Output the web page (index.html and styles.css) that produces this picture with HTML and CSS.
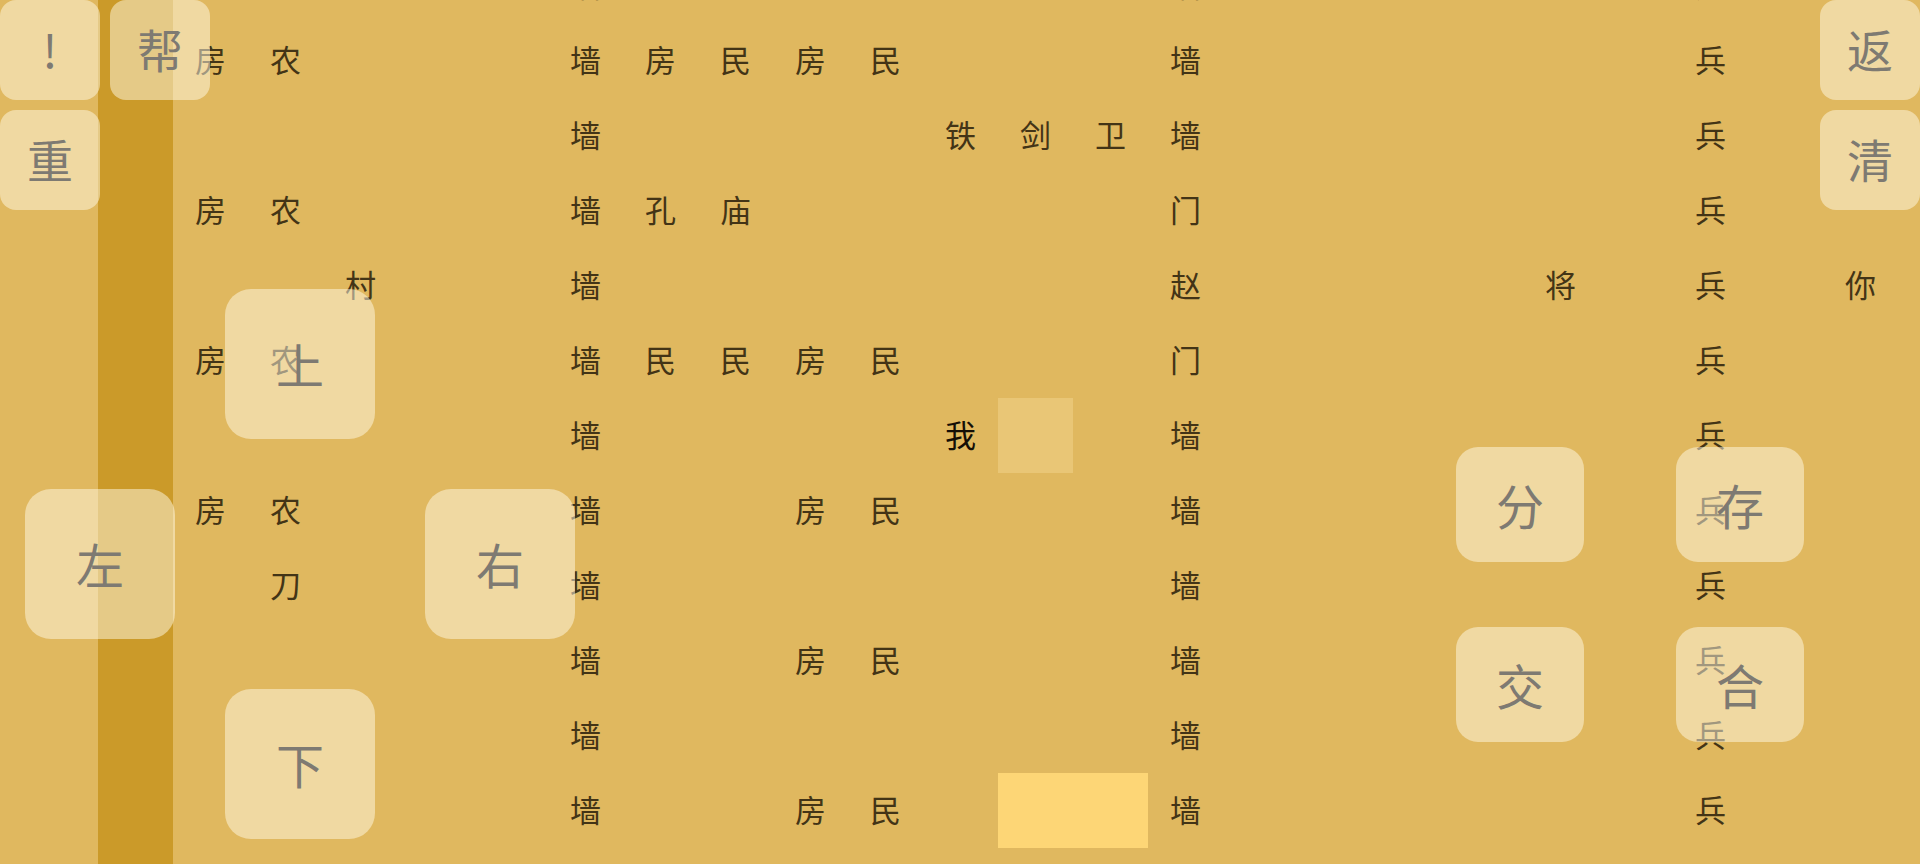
FILE: index.html
```html
<!DOCTYPE html>
<html lang="zh">
<head>
<meta charset="utf-8">
<title>村</title>
<link rel="stylesheet" href="styles.css">
</head>
<body>
<div class="screen">
  <div class="map">
    <div class="row"><i></i><i></i><i></i><i></i><i></i><i></i><i></i><i></i><i>墙</i><i></i><i></i><i></i><i></i><i></i><i></i><i></i><i>墙</i><i></i><i></i><i></i><i></i><i></i><i></i><i>兵</i><i></i><i></i></div>
    <div class="row"><i></i><i></i><i></i><i>房</i><i>农</i><i></i><i></i><i></i><i>墙</i><i>房</i><i>民</i><i>房</i><i>民</i><i></i><i></i><i></i><i>墙</i><i></i><i></i><i></i><i></i><i></i><i></i><i>兵</i><i></i><i></i></div>
    <div class="row"><i></i><i></i><i></i><i></i><i></i><i></i><i></i><i></i><i>墙</i><i></i><i></i><i></i><i></i><i>铁</i><i>剑</i><i>卫</i><i>墙</i><i></i><i></i><i></i><i></i><i></i><i></i><i>兵</i><i></i><i></i></div>
    <div class="row"><i></i><i></i><i></i><i>房</i><i>农</i><i></i><i></i><i></i><i>墙</i><i>孔</i><i>庙</i><i></i><i></i><i></i><i></i><i></i><i>门</i><i></i><i></i><i></i><i></i><i></i><i></i><i>兵</i><i></i><i></i></div>
    <div class="row"><i></i><i></i><i></i><i></i><i></i><i>村</i><i></i><i></i><i>墙</i><i></i><i></i><i></i><i></i><i></i><i></i><i></i><i>赵</i><i></i><i></i><i></i><i></i><i>将</i><i></i><i>兵</i><i></i><i>你</i></div>
    <div class="row"><i></i><i></i><i></i><i>房</i><i>农</i><i></i><i></i><i></i><i>墙</i><i>民</i><i>民</i><i>房</i><i>民</i><i></i><i></i><i></i><i>门</i><i></i><i></i><i></i><i></i><i></i><i></i><i>兵</i><i></i><i></i></div>
    <div class="row"><i></i><i></i><i></i><i></i><i></i><i></i><i></i><i></i><i>墙</i><i></i><i></i><i></i><i></i><i class="me">我</i><i class="near"></i><i></i><i>墙</i><i></i><i></i><i></i><i></i><i></i><i></i><i>兵</i><i></i><i></i></div>
    <div class="row"><i></i><i></i><i></i><i>房</i><i>农</i><i></i><i></i><i></i><i>墙</i><i></i><i></i><i>房</i><i>民</i><i></i><i></i><i></i><i>墙</i><i></i><i></i><i></i><i></i><i></i><i></i><i>兵</i><i></i><i></i></div>
    <div class="row"><i></i><i></i><i></i><i></i><i>刀</i><i></i><i></i><i></i><i>墙</i><i></i><i></i><i></i><i></i><i></i><i></i><i></i><i>墙</i><i></i><i></i><i></i><i></i><i></i><i></i><i>兵</i><i></i><i></i></div>
    <div class="row"><i></i><i></i><i></i><i></i><i></i><i></i><i></i><i></i><i>墙</i><i></i><i></i><i>房</i><i>民</i><i></i><i></i><i></i><i>墙</i><i></i><i></i><i></i><i></i><i></i><i></i><i>兵</i><i></i><i></i></div>
    <div class="row"><i></i><i></i><i></i><i></i><i></i><i></i><i></i><i></i><i>墙</i><i></i><i></i><i></i><i></i><i></i><i></i><i></i><i>墙</i><i></i><i></i><i></i><i></i><i></i><i></i><i>兵</i><i></i><i></i></div>
    <div class="row"><i></i><i></i><i></i><i></i><i></i><i></i><i></i><i></i><i>墙</i><i></i><i></i><i>房</i><i>民</i><i></i><i class="mark"></i><i class="mark"></i><i>墙</i><i></i><i></i><i></i><i></i><i></i><i></i><i>兵</i><i></i><i></i></div>
    <div class="row"><i></i><i></i><i></i><i></i><i></i><i></i><i></i><i></i><i>墙</i><i></i><i></i><i></i><i></i><i></i><i></i><i></i><i>墙</i><i></i><i></i><i></i><i></i><i></i><i></i><i>兵</i><i></i><i></i></div>
  </div>

  <div class="pad-tl">
    <div class="btn small">!</div>
    <div class="btn small">帮</div>
    <div class="btn small">重</div>
  </div>

  <div class="pad-tr">
    <div class="btn small">返</div>
    <div class="btn small">清</div>
  </div>

  <div class="dpad">
    <div class="btn big up">上</div>
    <div class="btn big left">左</div>
    <div class="btn big right">右</div>
    <div class="btn big down">下</div>
  </div>

  <div class="act">
    <div class="btn mid">分</div>
    <div class="btn mid">存</div>
    <div class="btn mid">交</div>
    <div class="btn mid">合</div>
  </div>
</div>
</body>
</html>
```
FILE: styles.css
```css
html, body {
  margin: 0;
  padding: 0;
  background: #e0b85f;
}

.screen {
  position: relative;
  width: 1920px;
  height: 864px;
  overflow: hidden;
  background: #e0b85f;
  font-family: "Noto Sans CJK SC", "Noto Sans", sans-serif;
}

.map {
  margin-left: -52px;
  margin-top: -52px;
}

.row {
  display: grid;
  grid-template-columns: repeat(26, 75px);
  height: 75px;
}

.row > i {
  font-style: normal;
  display: flex;
  align-items: center;
  justify-content: center;
  box-sizing: border-box;
  padding-bottom: 4px;
  font-size: 31px;
  color: #433416;
}

.row > i:nth-child(3) {
  background: #cb9a29;
}

.row > i.me {
  color: #150f06;
}

.row > i.near {
  background: #e9c676;
}

.row > i.mark {
  background: #fdd676;
}

.btn {
  display: flex;
  align-items: center;
  justify-content: center;
  box-sizing: border-box;
  background: rgba(255, 250, 230, 0.5);
  color: #7e7a72;
}

.small {
  border-radius: 16px;
  font-size: 46px;
  padding-bottom: 4px;
}

.big {
  border-radius: 26px;
  font-size: 48px;
  padding-bottom: 2px;
}

.mid {
  border-radius: 22px;
  font-size: 48px;
  padding-bottom: 2px;
}

.pad-tl {
  position: absolute;
  left: 0;
  top: 0;
  display: grid;
  grid-template-columns: 100px 100px;
  grid-auto-rows: 100px;
  gap: 10px;
}

.pad-tr {
  position: absolute;
  right: 0;
  top: 0;
  display: grid;
  grid-template-columns: 100px;
  grid-auto-rows: 100px;
  gap: 10px;
}

.dpad {
  position: absolute;
  left: 25px;
  top: 289px;
  display: grid;
  grid-template-columns: repeat(3, 150px);
  grid-template-rows: repeat(3, 150px);
  gap: 50px;
}

.up { grid-column: 2; grid-row: 1; }
.left { grid-column: 1; grid-row: 2; }
.right { grid-column: 3; grid-row: 2; }
.down { grid-column: 2; grid-row: 3; }

.act {
  position: absolute;
  left: 1456px;
  top: 447px;
  display: grid;
  grid-template-columns: 128px 128px;
  grid-template-rows: 115px 115px;
  column-gap: 92px;
  row-gap: 65px;
}
```
